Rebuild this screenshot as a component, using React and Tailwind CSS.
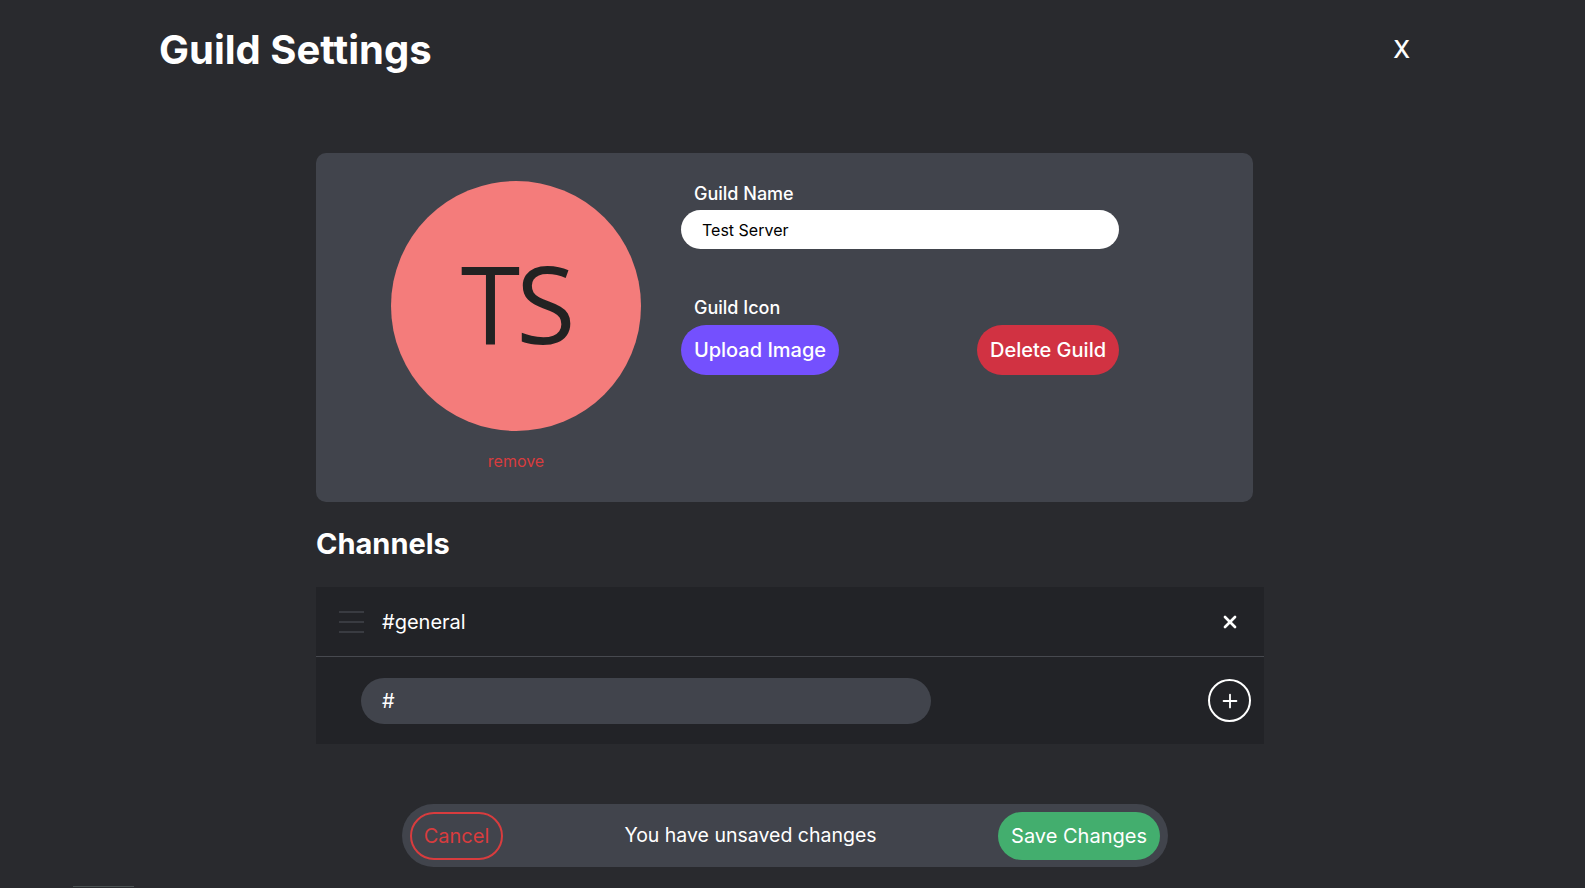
import React, { useState } from 'react';
import { X, Plus } from 'lucide-react';

const GuildSettings = () => {
  const [name, setName] = useState('Test Server');
  const [newChannel, setNewChannel] = useState('');
  const channels = [{ id: 1, name: 'general' }];

  return (
    <div className="min-h-screen bg-[#292a2e] text-white font-['Inter','Liberation_Sans',sans-serif]">
      {/* header */}
      <header className="flex items-center justify-between pl-[159px] pr-[175px] pt-[26px]">
        <h1 className="text-[40px] leading-[48px] font-bold">Guild Settings</h1>
        <button className="text-[24px] font-medium leading-none">X</button>
      </header>

      <main className="pl-[316px] pt-[79px]">
        {/* guild card */}
        <div className="flex items-start w-[937px] h-[349px] rounded-[10px] bg-[#41444c]">
          <div className="flex flex-col items-center w-[250px] ml-[75px] mt-[28px]">
            <div className="flex items-center justify-center w-[250px] h-[250px] rounded-full bg-[#f47c7b] pb-[6px]">
              <span className="text-[#222222] text-[108px] leading-none font-['Open_Sans',sans-serif] tracking-[-4px]">TS</span>
            </div>
            <button className="mt-[18px] text-[16px] leading-6 text-[#d83c3e]">remove</button>
          </div>

          <div className="ml-[40px] mt-[27px] w-[438px]">
            <label className="block pl-[13px] text-[18px] leading-[28px] font-medium">Guild Name</label>
            <input
              value={name}
              onChange={(e) => setName(e.target.value)}
              className="mt-[2px] w-full h-[39px] rounded-full bg-white pl-[21px] text-[16px] text-black outline-none"
            />
            <label className="block mt-[45px] pl-[13px] text-[18px] leading-[28px] font-medium">Guild Icon</label>
            <div className="mt-[3px] flex justify-between">
              <button className="h-[50px] w-[158px] rounded-full bg-[#7450fe] text-[20px] font-medium">Upload Image</button>
              <button className="h-[50px] w-[142px] rounded-full bg-[#d13242] text-[20px] font-medium">Delete Guild</button>
            </div>
          </div>
        </div>

        {/* channels */}
        <h2 className="mt-[25px] text-[29px] leading-[34px] font-bold">Channels</h2>
        <div className="mt-[26px] w-[948px] bg-[#222327]">
          {channels.map((c) => (
            <div key={c.id} className="flex items-center h-[70px] pl-[23px] pr-[24px] border-b border-[#47494f]">
              <div className="flex flex-col gap-[8px] w-[25px]">
                <span className="h-[2px] bg-[#393b41]" />
                <span className="h-[2px] bg-[#393b41]" />
                <span className="h-[2px] bg-[#393b41]" />
              </div>
              <span className="ml-[18px] text-[20px]">#{c.name}</span>
              <button className="ml-auto">
                <X size={20} strokeWidth={3.2} />
              </button>
            </div>
          ))}
          <div className="flex items-center h-[87px] pl-[45px] pr-[13px]">
            <div className="flex items-center w-[570px] h-[46px] rounded-full bg-[#41444c] pl-[21px]">
              <span className="text-[20px]">#</span>
              <input
                value={newChannel}
                onChange={(e) => setNewChannel(e.target.value)}
                className="flex-1 bg-transparent outline-none text-[20px]"
              />
            </div>
            <button className="ml-auto flex items-center justify-center w-[43px] h-[43px] rounded-full border-2 border-white">
              <Plus size={22} strokeWidth={2} />
            </button>
          </div>
        </div>

        {/* unsaved changes bar */}
        <div className="mt-[60px] ml-[86px] flex items-center justify-between w-[766px] h-[63px] rounded-full bg-[#41444c] px-[8px]">
          <button className="h-[48px] w-[93px] rounded-full border-2 border-[#d83c3e] text-[#d83c3e] text-[20px]">Cancel</button>
          <span className="text-[19.5px]">You have unsaved changes</span>
          <button className="h-[48px] w-[162px] rounded-full bg-[#43ae6e] text-[20px]">Save Changes</button>
        </div>
      </main>

      <div className="ml-[73px] mt-[19px] h-px w-[61px] bg-[#4b5253]" />
    </div>
  );
};

export default function App() {
  return <GuildSettings />;
}
